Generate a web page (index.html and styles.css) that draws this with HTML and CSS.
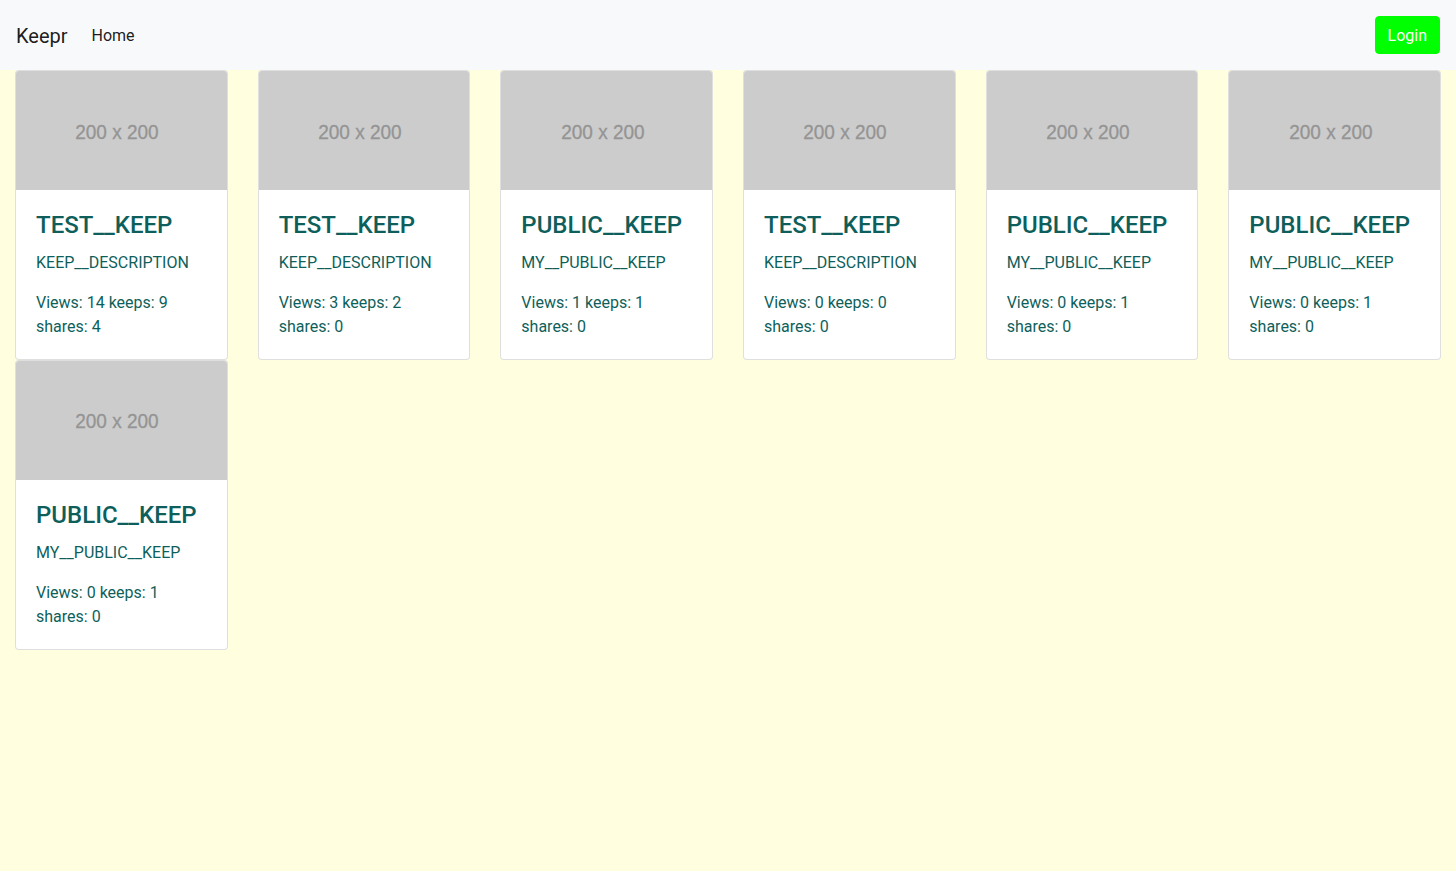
FILE: index.html
```html
<!DOCTYPE html>
<html>
<head>
<meta charset="utf-8">
<link rel="stylesheet" href="styles.css">
</head>
<body>
<nav class="navbar">
  <div class="nav-left">
    <span class="brand">Keepr</span>
    <a class="nav-link">Home</a>
  </div>
  <button class="login">Login</button>
</nav>
<main class="grid">
  <div class="col"><div class="card"><div class="img"><span>200 x 200</span></div><div class="body"><h3>TEST__KEEP</h3><p class="desc">KEEP__DESCRIPTION</p><p class="stats">Views: 14 keeps: 9 shares: 4</p></div></div></div>
  <div class="col"><div class="card"><div class="img"><span>200 x 200</span></div><div class="body"><h3>TEST__KEEP</h3><p class="desc">KEEP__DESCRIPTION</p><p class="stats">Views: 3 keeps: 2 shares: 0</p></div></div></div>
  <div class="col"><div class="card"><div class="img"><span>200 x 200</span></div><div class="body"><h3>PUBLIC__KEEP</h3><p class="desc">MY__PUBLIC__KEEP</p><p class="stats">Views: 1 keeps: 1 shares: 0</p></div></div></div>
  <div class="col"><div class="card"><div class="img"><span>200 x 200</span></div><div class="body"><h3>TEST__KEEP</h3><p class="desc">KEEP__DESCRIPTION</p><p class="stats">Views: 0 keeps: 0 shares: 0</p></div></div></div>
  <div class="col"><div class="card"><div class="img"><span>200 x 200</span></div><div class="body"><h3>PUBLIC__KEEP</h3><p class="desc">MY__PUBLIC__KEEP</p><p class="stats">Views: 0 keeps: 1 shares: 0</p></div></div></div>
  <div class="col"><div class="card"><div class="img"><span>200 x 200</span></div><div class="body"><h3>PUBLIC__KEEP</h3><p class="desc">MY__PUBLIC__KEEP</p><p class="stats">Views: 0 keeps: 1 shares: 0</p></div></div></div>
  <div class="col"><div class="card"><div class="img"><span>200 x 200</span></div><div class="body"><h3>PUBLIC__KEEP</h3><p class="desc">MY__PUBLIC__KEEP</p><p class="stats">Views: 0 keeps: 1 shares: 0</p></div></div></div>
</main>
</body>
</html>
```
FILE: styles.css
```css
* { box-sizing: border-box; }
html, body { margin: 0; height: 100%; }
body {
  background: #ffffe0;
  font-family: Roboto, "Liberation Sans", sans-serif;
  font-size: 16px;
  line-height: 1.5;
  color: #212529;
}
.navbar {
  height: 70px;
  background: #f8f9fa;
  display: flex;
  align-items: center;
  justify-content: space-between;
  padding: 0 16px;
}
.nav-left { display: flex; align-items: center; padding-top: 2px; }
.brand {
  font-size: 20px;
  color: rgba(0,0,0,.9);
  margin-right: 24px;
}
.nav-link {
  font-size: 16px;
  color: rgba(0,0,0,.9);
  padding: 8px 0;
}
.login {
  background: #00ff00;
  color: #fff;
  border: 1px solid #00ff00;
  border-radius: 4px;
  height: 38px;
  padding: 0 12px;
  font-family: inherit;
  font-size: 16px;
}
.grid {
  display: grid;
  grid-template-columns: repeat(6, 1fr);
}
.col { padding: 0 15px; }
.card {
  background: #fff;
  border: 1px solid rgba(0,0,0,.125);
  border-radius: 4px;
  overflow: hidden;
}
.img {
  height: 119px;
  background: #cccccc;
  display: flex;
  align-items: center;
  justify-content: center;
  padding-right: 8px;
}
.img span {
  font-family: "Liberation Sans", Arial, sans-serif;
  color: #949494;
  font-size: 20px;
  padding-top: 2px;
  transform: scaleX(0.95);
  -webkit-text-stroke: 0.3px #949494;
}
.body { padding: 21px 20px 20px; color: #0e5f5b; }
h3 {
  margin: 0 0 11px;
  font-size: 24px;
  font-weight: 500;
  line-height: 1.2;
  color: #0e5f5b;
}
.desc { margin: 0 0 16px; }
.stats { margin: 0; }
```
